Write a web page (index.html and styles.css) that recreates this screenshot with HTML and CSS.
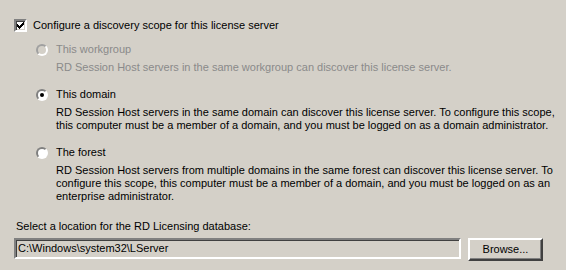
FILE: index.html
```
<html>
<head>
    <title>License server discovery scope</title>
    <link rel="stylesheet" href="styles.css">
</head>
<body>
<div class="page">
    <label class="check-row">
        <span class="checkbox">
            <svg class="check" width="7" height="7" viewBox="0 0 7 7">
                <path d="M0 2h1v3H0z M1 3h1v3H1z M2 4h1v3H2z M3 3h1v3H3z M4 2h1v3H4z M5 1h1v3H5z M6 0h1v3H6z" fill="#000"/>
            </svg>
        </span>
        <span>Configure a discovery scope for this license server</span>
    </label>

    <div class="option disabled first">
        <label class="radio-row">
            <span class="radio"></span>
            <span>This workgroup</span>
        </label>
        <div class="desc">RD Session Host servers in the same workgroup can discover this license server.</div>
    </div>

    <div class="option">
        <label class="radio-row">
            <span class="radio selected"></span>
            <span>This domain</span>
        </label>
        <div class="desc">RD Session Host servers in the same domain can discover this license server. To configure this scope,<br>
            this computer must be a member of a domain, and you must be logged on as a domain administrator.</div>
    </div>

    <div class="option">
        <label class="radio-row">
            <span class="radio"></span>
            <span>The forest</span>
        </label>
        <div class="desc">RD Session Host servers from multiple domains in the same forest can discover this license server. To<br>
            configure this scope, this computer must be a member of a domain, and you must be logged on as an<br>
            enterprise administrator.</div>
    </div>

    <div class="location-label">Select a location for the RD Licensing database:</div>
    <div class="location-row">
        <div class="textbox">C:\Windows\system32\LServer</div>
        <div class="button">Browse...</div>
    </div>
</div>
</body>
</html>
```

FILE: styles.css
```
body {
    margin: 0;
    background: #d4d0c8;
    font: 11px "Liberation Sans", Arial, sans-serif;
    line-height: 13px;
    color: #000;
}

.page {
    padding: 19px 0 0 14px;
}

.check-row,
.radio-row {
    display: flex;
    align-items: center;
    height: 13px;
}

.checkbox {
    display: flex;
    align-items: center;
    justify-content: center;
    width: 9px;
    height: 9px;
    margin-right: 6px;
    border: 2px solid;
    border-color: #808080 #fff #fff #808080;
    box-shadow: inset 1px 1px 0 #404040, inset -1px -1px 0 #d4d0c8;
    background: #fff;
}

.check {
    display: block;
    shape-rendering: crispEdges;
}

.option {
    padding-left: 22px;
    margin-top: 14px;
}

.option.first {
    margin-top: 11px;
}

.radio {
    width: 8px;
    height: 8px;
    margin-right: 8px;
    border: 2px solid;
    border-color: #808080 #fff #fff #808080;
    border-radius: 50%;
    background: #fff;
    position: relative;
}

.radio.selected:after {
    content: "";
    position: absolute;
    left: 2px;
    top: 2px;
    width: 4px;
    height: 4px;
    border-radius: 50%;
    background: #000;
}

.disabled {
    color: #8a8a8a;
}

.disabled .radio {
    background: #d4d0c8;
    border-color: #a0a0a0 #fff #fff #a0a0a0;
}

.desc {
    padding-left: 20px;
    margin-top: 5px;
    white-space: nowrap;
}

.location-label {
    margin-top: 17px;
    padding-left: 2px;
}

.location-row {
    display: flex;
    margin-top: 5px;
}

.textbox {
    width: 441px;
    height: 17px;
    padding-left: 2px;
    line-height: 17px;
    border: 2px solid;
    border-color: #808080 #fff #fff #808080;
    box-shadow: inset 1px 1px 0 #404040, inset -1px -1px 0 #d4d0c8;
}

.button {
    width: 71px;
    height: 19px;
    margin-left: 7px;
    line-height: 19px;
    text-align: center;
    border: 2px solid;
    border-color: #fff #404040 #404040 #fff;
    box-shadow: inset -1px -1px 0 #808080;
}
```
